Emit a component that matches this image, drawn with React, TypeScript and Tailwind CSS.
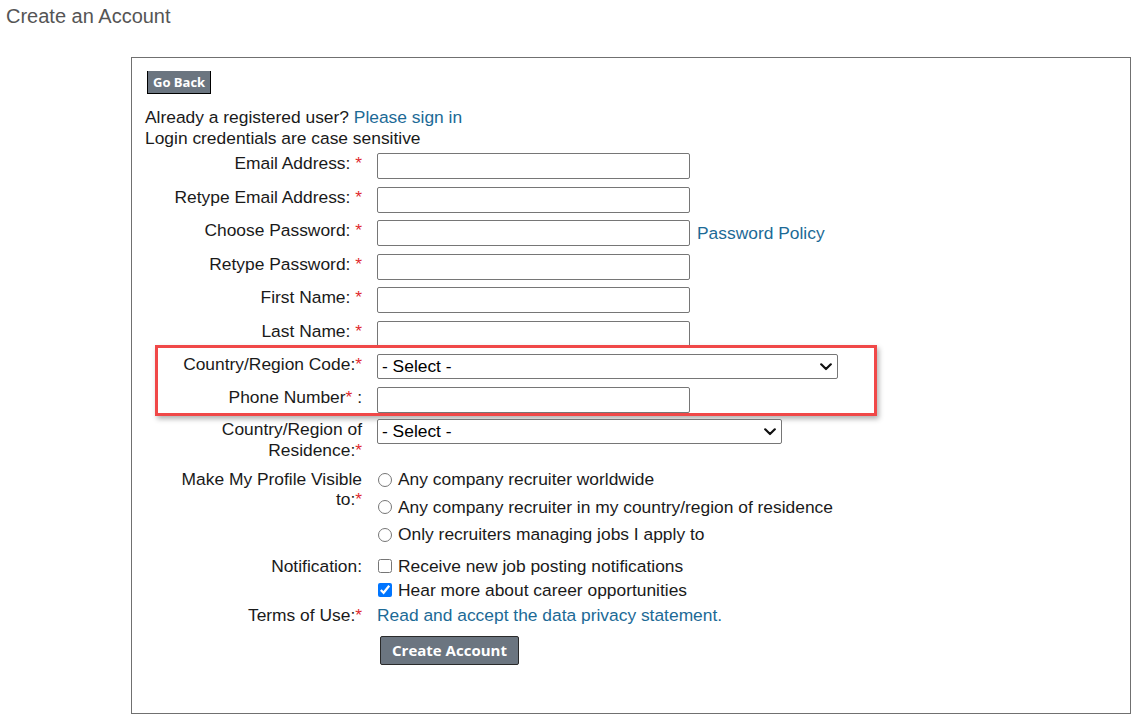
import React from "react";

const Req = () => <span className="text-[#e0282e]">*</span>;

const Label = ({ children }: { children: React.ReactNode }) => (
  <div className="w-[217px] shrink-0 pl-[21px] text-right leading-[21px]">{children}</div>
);

const TextInput = () => (
  <input
    type="text"
    className="block w-[313px] h-[26px] border border-[#767676] rounded-[2px] bg-white px-[4px] outline-none"
  />
);

const Select = ({ width }: { width: string }) => (
  <div className={`relative h-[25px] ${width}`}>
    <select className="appearance-none block w-full h-full border border-[#767676] rounded-[2px] bg-white pl-[4px] pr-[24px] text-black leading-[21px] outline-none">
      <option>- Select -</option>
    </select>
    <svg
      className="pointer-events-none absolute right-[6px] top-[9px]"
      width="12"
      height="8"
      viewBox="0 0 12 8"
      fill="none"
    >
      <path d="M1.2 1.3 L6 6 L10.8 1.3" stroke="#111" strokeWidth="2.2" strokeLinecap="round" strokeLinejoin="round" />
    </svg>
  </div>
);

export default function App() {
  return (
    <div
      className="min-h-[723px] bg-white text-[#1a1a1a] text-[17.4px]"
      style={{ fontFamily: '"Liberation Sans", Arial, sans-serif' }}
    >
      <div className="pl-[6px] pt-[4px] h-[28px] text-[20px] leading-[24px] text-[#555555]">
        Create an Account
      </div>
      <div className="ml-[131px] mt-[29px] w-[1000px] h-[657px] border border-[#707070] pl-[13px] pt-[13px]">
        <button
          className="block ml-[2px] h-[23px] px-[5px] bg-[#6b7580] text-white font-bold text-[13px] leading-[21px] border-l border-r border-b border-t-0 border-black"
          style={{ fontFamily: '"Open Sans", sans-serif' }}
        >
          Go Back
        </button>
        <div className="mt-[12.5px] leading-[21px]">
          Already a registered user? <span className="text-[#1c6a96]">Please sign in</span>
        </div>
        <div className="leading-[21px]">Login credentials are case sensitive</div>

        <div className="mt-[4.5px] flex flex-col">
          <div className="flex items-start">
            <Label>
              {"Email Address: "}
              <Req />
            </Label>
            <div className="ml-[15px]">
              <TextInput />
            </div>
          </div>
          <div className="flex items-start mt-[7.5px]">
            <Label>
              {"Retype Email Address: "}
              <Req />
            </Label>
            <div className="ml-[15px]">
              <TextInput />
            </div>
          </div>
          <div className="flex items-start mt-[7.5px]">
            <Label>
              {"Choose Password: "}
              <Req />
            </Label>
            <div className="ml-[15px] flex items-center">
              <TextInput />
              <span className="ml-[7px] text-[#1c6a96] leading-[21px]">Password Policy</span>
            </div>
          </div>
          <div className="flex items-start mt-[7.5px]">
            <Label>
              {"Retype Password: "}
              <Req />
            </Label>
            <div className="ml-[15px]">
              <TextInput />
            </div>
          </div>
          <div className="flex items-start mt-[7.5px]">
            <Label>
              {"First Name: "}
              <Req />
            </Label>
            <div className="ml-[15px]">
              <TextInput />
            </div>
          </div>
          <div className="flex items-start mt-[7.5px]">
            <Label>
              {"Last Name: "}
              <Req />
            </Label>
            <div className="ml-[15px]">
              <TextInput />
            </div>
          </div>

          <div className="relative mt-[7.5px]">
            <div className="pointer-events-none absolute left-[10px] top-[-9px] w-[722px] h-[71px] border-[3px] border-[#f04848] shadow-[2px_3px_5px_rgba(0,0,0,0.3)]" />
            <div className="flex items-start">
              <Label>
                Country/Region Code:<Req />
              </Label>
              <div className="ml-[15px]">
                <Select width="w-[461px]" />
              </div>
            </div>
            <div className="flex items-start mt-[7.5px]">
              <Label>
                Phone Number<Req /> :
              </Label>
              <div className="ml-[15px]">
                <TextInput />
              </div>
            </div>
          </div>

          <div className="flex items-start mt-[6.5px]">
            <Label>
              Country/Region of Residence:<Req />
            </Label>
            <div className="ml-[15px]">
              <Select width="w-[405px]" />
            </div>
          </div>

          <div className="flex items-start mt-[8px]">
            <div className="w-[217px] shrink-0 pl-[21px] text-right leading-[20px]">
              Make My Profile Visible to:<Req />
            </div>
            <div className="ml-[16px] flex flex-col gap-[6.5px]">
              {[
                "Any company recruiter worldwide",
                "Any company recruiter in my country/region of residence",
                "Only recruiters managing jobs I apply to",
              ].map((t) => (
                <label key={t} className="flex items-center leading-[21px] h-[21px]">
                  <input type="radio" name="visible" className="m-0 w-[14px] h-[14px]" />
                  <span className="ml-[6px]">{t}</span>
                </label>
              ))}
            </div>
          </div>

          <div className="flex items-start mt-[10.5px]">
            <Label>Notification:</Label>
            <div className="ml-[16px] flex flex-col gap-[3px]">
              <label className="flex items-center leading-[21px] h-[21px]">
                <input type="checkbox" className="m-0 w-[14px] h-[14px]" />
                <span className="ml-[6px]">Receive new job posting notifications</span>
              </label>
              <label className="flex items-center leading-[21px] h-[21px]">
                <input type="checkbox" defaultChecked className="m-0 w-[14px] h-[14px] accent-[#0075ff]" />
                <span className="ml-[6px]">Hear more about career opportunities</span>
              </label>
            </div>
          </div>

          <div className="flex items-start mt-[4px]">
            <Label>
              Terms of Use:<Req />
            </Label>
            <div className="ml-[15px] leading-[21px] text-[#1c6a96]">
              Read and accept the data privacy statement.
            </div>
          </div>

          <div className="flex items-start mt-[10.5px]">
            <div className="w-[217px] shrink-0" />
            <button
              className="ml-[18px] h-[29px] w-[139px] bg-[#6b7580] text-white font-bold text-[15px] leading-[27px] border border-[#2a2a2a] rounded-[2px]"
              style={{ fontFamily: '"Open Sans", sans-serif' }}
            >
              Create Account
            </button>
          </div>
        </div>
      </div>
    </div>
  );
}
